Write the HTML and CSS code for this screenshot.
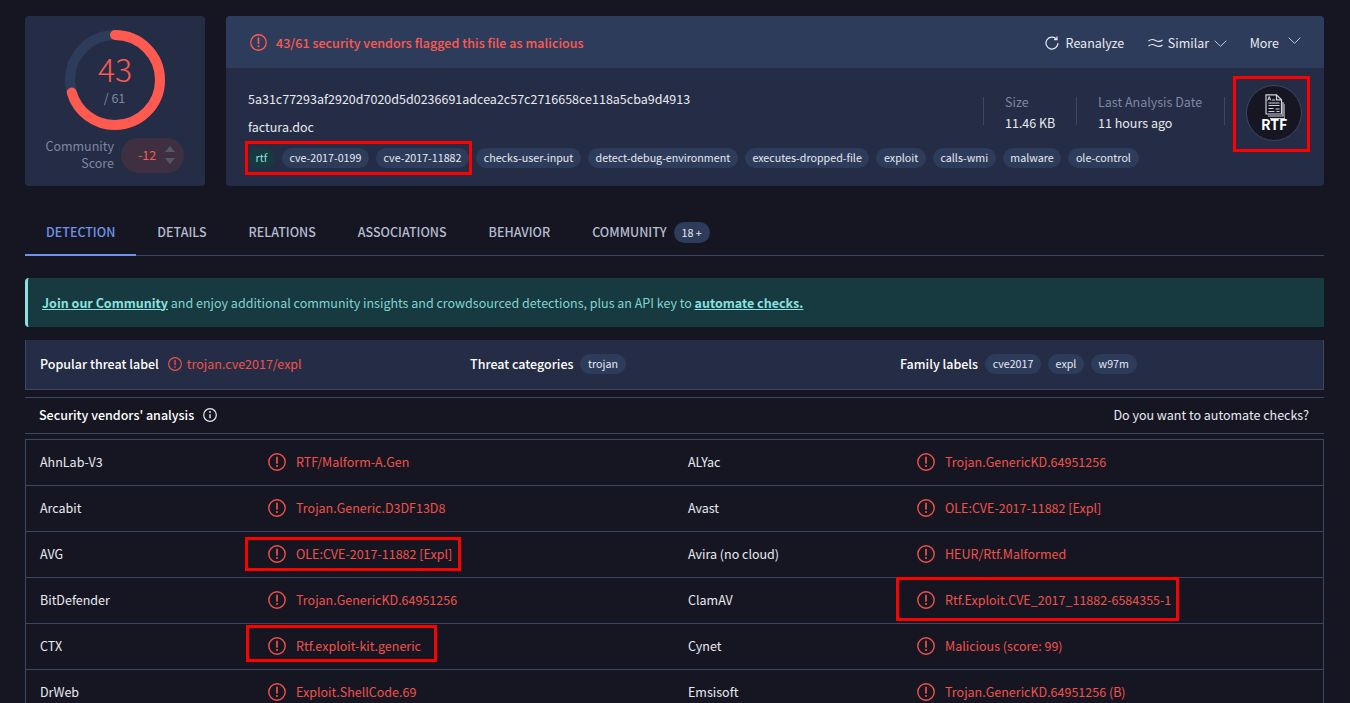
FILE: index.html
```
<!DOCTYPE html>
<html lang="en">
<head>
<meta charset="utf-8">
<title>VirusTotal - File</title>
<link rel="stylesheet" href="styles.css">
</head>
<body>
<svg class="defs" width="0" height="0" aria-hidden="true">
  <symbol id="alert" viewBox="0 0 18 18">
    <circle cx="9" cy="9" r="8.2" fill="none" stroke="currentColor" stroke-width="1.4"/>
    <path d="M9 4.4v5.6" fill="none" stroke="currentColor" stroke-width="1.7" stroke-linecap="round"/>
    <circle cx="9" cy="13" r="1.05" fill="currentColor"/>
  </symbol>
</svg>
<main class="page">
  <section class="summary">
    <div class="score-card">
      <div class="gauge">
        <svg class="gauge-ring" width="100" height="100" viewBox="0 0 100 100">
          <circle class="ring-track" cx="50" cy="50" r="45"/>
          <circle class="ring-value" cx="50" cy="50" r="45" transform="rotate(-90 50 50)" pathLength="61" stroke-dasharray="43 61"/>
        </svg>
        <div class="gauge-label">
          <span class="gauge-num">43</span>
          <span class="gauge-total">/ 61</span>
        </div>
      </div>
      <div class="community">
        <span class="community-label">Community<br>Score</span>
        <span class="community-pill">
          <span class="community-val">-12</span>
          <span class="votes"><i class="tri-up"></i><i class="tri-down"></i></span>
        </span>
      </div>
    </div>
    <div class="file-card">
      <header class="file-head">
        <svg class="i-alert-head"><use href="#alert"/></svg>
        <strong class="flag-text">43/61 security vendors flagged this file as malicious</strong>
        <nav class="actions">
          <span class="action">
            <svg width="14" height="14" viewBox="0 0 14 14" fill="none" stroke="currentColor" stroke-width="1.2"><path d="M11.6 3.2A6 6 0 1 0 13 7"/><path d="M12 .6v3h-3"/></svg>
            Reanalyze
          </span>
          <span class="action similar">
            <svg width="15" height="10" viewBox="0 0 15 10" fill="none" stroke="currentColor" stroke-width="1.1"><path d="M.5 3C3 .8 5 1 7.5 2.4S12 4 14.5 2"/><path d="M.5 8C3 5.8 5 6 7.5 7.4S12 9 14.5 7"/></svg>
            Similar
            <svg class="chev" width="13" height="7" viewBox="0 0 13 7" fill="none" stroke="currentColor" stroke-width="1"><path d="M.7.7l5.8 5.6L12.3.7"/></svg>
          </span>
          <span class="action more">
            More
            <svg class="chev up" width="13" height="7" viewBox="0 0 13 7" fill="none" stroke="currentColor" stroke-width="1"><path d="M.7.7l5.8 5.6L12.3.7"/></svg>
          </span>
        </nav>
      </header>
      <div class="file-body">
        <div class="file-info">
          <div class="file-hash">5a31c77293af2920d7020d5d0236691adcea2c57c2716658ce118a5cba9d4913</div>
          <div class="file-name">factura.doc</div>
          <div class="tags">
            <span class="tag tag-green">rtf</span>
            <span class="tag">cve-2017-0199</span>
            <span class="tag">cve-2017-11882</span>
            <span class="tag">checks-user-input</span>
            <span class="tag">detect-debug-environment</span>
            <span class="tag">executes-dropped-file</span>
            <span class="tag">exploit</span>
            <span class="tag">calls-wmi</span>
            <span class="tag">malware</span>
            <span class="tag">ole-control</span>
          </div>
        </div>
        <div class="stat stat-size">
          <span class="stat-label">Size</span>
          <span class="stat-val">11.46 KB</span>
        </div>
        <div class="stat stat-date">
          <span class="stat-label">Last Analysis Date</span>
          <span class="stat-val">11 hours ago</span>
        </div>
        <div class="type-wrap">
          <i class="type-rule"></i>
          <div class="type-badge">
            <svg width="22" height="26" viewBox="0 0 22 26" fill="none" stroke="#d0d3da" stroke-width="1.2">
              <path d="M3 .8h10.5l5 5V20H3z" fill="#161622"/>
              <path d="M13.5.8v5h5"/>
              <path d="M5 22h15V8M7 24.5h15V10"/>
              <path d="M9 6h3M5.5 9h11M5.5 11.5h11"/>
              <path d="M5.5 14.5h5M5.5 17.5h6M12.5 15h4M13.5 17.5h3"/>
              <path d="M4.6 6.5l1.6-4 1.6 4M5.2 5h2" stroke-width="1"/>
            </svg>
            <span class="type-text">RTF</span>
          </div>
        </div>
      </div>
    </div>
  </section>

  <nav class="tabs">
    <span class="tab active">DETECTION</span>
    <span class="tab">DETAILS</span>
    <span class="tab">RELATIONS</span>
    <span class="tab">ASSOCIATIONS</span>
    <span class="tab">BEHAVIOR</span>
    <span class="tab">COMMUNITY <span class="tab-count">18 +</span></span>
  </nav>

  <div class="banner">
    <span><a class="banner-link">Join our Community</a> and enjoy additional community insights and crowdsourced detections, plus an API key to <a class="banner-link">automate checks.</a></span>
  </div>

  <section class="threat">
    <div class="threat-cell">
      <strong>Popular threat label</strong>
      <span class="threat-name"><svg class="i-alert-sm"><use href="#alert"/></svg>trojan.cve2017/expl</span>
    </div>
    <div class="threat-cell">
      <strong>Threat categories</strong>
      <span class="tag">trojan</span>
    </div>
    <div class="threat-cell">
      <strong>Family labels</strong>
      <span class="tag-row"><span class="tag">cve2017</span><span class="tag">expl</span><span class="tag">w97m</span></span>
    </div>
  </section>

  <div class="vendors-head">
    <strong>Security vendors' analysis</strong>
    <svg class="info" width="14" height="14" viewBox="0 0 14 14" fill="none" stroke="currentColor"><circle cx="7" cy="7" r="6.3" stroke-width="1.2"/><path d="M7 6.2v4" stroke-width="1.4"/><circle cx="7" cy="4" r=".9" fill="currentColor" stroke="none"/></svg>
    <span class="automate">Do you want to automate checks?</span>
  </div>

  <section class="vendors">
    <div class="row">
      <span class="vendor">AhnLab-V3</span>
      <span class="verdict"><svg class="i-alert"><use href="#alert"/></svg>RTF/Malform-A.Gen</span>
      <span class="vendor">ALYac</span>
      <span class="verdict"><svg class="i-alert"><use href="#alert"/></svg>Trojan.GenericKD.64951256</span>
    </div>
    <div class="row">
      <span class="vendor">Arcabit</span>
      <span class="verdict"><svg class="i-alert"><use href="#alert"/></svg>Trojan.Generic.D3DF13D8</span>
      <span class="vendor">Avast</span>
      <span class="verdict"><svg class="i-alert"><use href="#alert"/></svg>OLE:CVE-2017-11882 [Expl]</span>
    </div>
    <div class="row">
      <span class="vendor">AVG</span>
      <span class="verdict"><svg class="i-alert"><use href="#alert"/></svg>OLE:CVE-2017-11882 [Expl]</span>
      <span class="vendor">Avira (no cloud)</span>
      <span class="verdict"><svg class="i-alert"><use href="#alert"/></svg>HEUR/Rtf.Malformed</span>
    </div>
    <div class="row">
      <span class="vendor">BitDefender</span>
      <span class="verdict"><svg class="i-alert"><use href="#alert"/></svg>Trojan.GenericKD.64951256</span>
      <span class="vendor">ClamAV</span>
      <span class="verdict"><svg class="i-alert"><use href="#alert"/></svg>Rtf.Exploit.CVE_2017_11882-6584355-1</span>
    </div>
    <div class="row">
      <span class="vendor">CTX</span>
      <span class="verdict"><svg class="i-alert"><use href="#alert"/></svg>Rtf.exploit-kit.generic</span>
      <span class="vendor">Cynet</span>
      <span class="verdict"><svg class="i-alert"><use href="#alert"/></svg>Malicious (score: 99)</span>
    </div>
    <div class="row">
      <span class="vendor">DrWeb</span>
      <span class="verdict"><svg class="i-alert"><use href="#alert"/></svg>Exploit.ShellCode.69</span>
      <span class="vendor">Emsisoft</span>
      <span class="verdict"><svg class="i-alert"><use href="#alert"/></svg>Trojan.GenericKD.64951256 (B)</span>
    </div>
  </section>
</main>
<div class="mark mark-tags"></div>
<div class="mark mark-type"></div>
<div class="mark mark-avg"></div>
<div class="mark mark-ctx"></div>
<div class="mark mark-clam"></div>
</body>
</html>
```
FILE: styles.css
```
* { box-sizing: border-box; }
html, body { margin: 0; height: 703px; overflow: hidden; }
body {
  background: #161623;
  color: #e8eaf0;
  font-family: "Noto Sans CJK SC", "Noto Sans", sans-serif;
  font-size: 12.5px;
  line-height: 18px;
  position: relative;
}
.defs { position: absolute; }
.page { padding: 16px 26px 0 25px; }
strong { font-weight: 500; }

.summary { display: flex; gap: 21px; height: 170px; }
.score-card {
  width: 180px; background: #252c45; border-radius: 4px;
  padding-top: 14px; display: flex; flex-direction: column; align-items: center;
}
.gauge { position: relative; width: 100px; height: 100px; }
.gauge-ring { display: block; }
.ring-track, .ring-value { fill: none; stroke-width: 10; }
.ring-track { stroke: #2e3c5c; }
.ring-value { stroke: #ff5a50; stroke-linecap: round; }
.gauge-label { position: absolute; inset: 0; display: flex; flex-direction: column; align-items: center; }
.gauge-num { color: #ff5a50; font-size: 32px; line-height: 32px; font-weight: 300; margin-top: 22px; }
.gauge-total { color: #7d88a3; font-size: 12.5px; line-height: 18px; margin-top: 5px; margin-right: 1px; }
.community { display: flex; align-items: center; gap: 7px; margin-top: 7px; width: 100%; padding-left: 20px; }
.community-label { color: #7d88a3; text-align: right; width: 69px; line-height: 17px; padding-bottom: 2px; }
.community-pill {
  width: 63px; height: 35px; border-radius: 18px; background: #3e3040;
  display: flex; align-items: center; padding-left: 17px; position: relative;
}
.community-val { color: #ff5a50; }
.votes { position: absolute; right: 9px; top: 8px; display: flex; flex-direction: column; gap: 6px; }
.tri-up, .tri-down { display: block; width: 0; height: 0; border-left: 5px solid transparent; border-right: 5px solid transparent; }
.tri-up { border-bottom: 6px solid #54566a; }
.tri-down { border-top: 6px solid #54566a; }

.file-card { flex: 1; min-width: 0; background: #252c45; border-radius: 4px; overflow: hidden; display: flex; flex-direction: column; }
.file-head { height: 52px; background: #2e3c5c; display: flex; align-items: center; padding: 2px 23px 0 24px; flex: none; }
.i-alert-head { width: 17px; height: 17px; color: #ff5a50; margin-right: 9px; margin-top: -2px; }
.flag-text { color: #ff5a50; letter-spacing: .04px; }
.actions { margin-left: auto; display: flex; color: #e8eaf0; }
.action { display: flex; align-items: center; gap: 7px; white-space: nowrap; }
.similar { margin-left: 23.5px; gap: 5px; }
.more { margin-left: 22.5px; gap: 9px; }
.chev { color: #c3c9d8; }
.chev.up { margin-top: -5px; }

.file-body { flex: 1; display: flex; padding-left: 22px; }
.file-info { flex: 1; min-width: 0; padding-top: 22px; }
.file-hash { line-height: 18px; }
.file-name { margin-top: 10px; line-height: 18px; }
.tags { display: flex; gap: 7px; margin-top: 12px; }
.tag-row { display: flex; gap: 7px; }
.tag {
  display: inline-block; height: 20px; line-height: 20px; padding: 0 7.6px; border-radius: 10px;
  background: #2e3c5c; color: #e8eaf0; font-size: 10.7px; white-space: nowrap;
}
.tag-green { background: #163a3f; color: #8be0e0; }
.stat {
  display: flex; flex-direction: column; margin-top: 29px; height: 28px; border-left: 1px solid #3c4763;
  padding-left: 21px; flex: none; white-space: nowrap;
}
.stat-size { width: 93px; }
.stat-date { width: 148px; }
.stat-label { color: #7d88a3; line-height: 18px; margin-top: -4px; }
.stat-val { line-height: 18px; margin-top: 3px; }
.type-wrap { width: 100px; padding-left: 22px; padding-top: 17px; flex: none; position: relative; }
.type-rule { position: absolute; left: 0; top: 29px; height: 28px; width: 1px; background: #3c4763; }
.type-badge {
  width: 56px; height: 56px; border-radius: 50%; background: #161622; border: 1px solid #3c4763;
  display: flex; flex-direction: column; align-items: center; padding-top: 8px;
}
.type-text { font-weight: 700; font-size: 14px; line-height: 14px; color: #fff; margin-top: -3px; }

.tabs { display: flex; height: 48px; margin-top: 22px; border-bottom: 1px solid #3c4763; }
.tab {
  padding: 0 21px; height: 48px; font-size: 12.5px; font-weight: 500; color: #b4bcd0;
  display: flex; align-items: center; gap: 7px;
}
.tab.active { color: #6f93e8; border-bottom: 2px solid #6f93e8; padding-top: 1px; }
.tab-count {
  background: #2e3c5c; color: #e8eaf0; font-size: 10.7px; font-weight: 400; height: 21px; line-height: 21px; padding: 0 8px; border-radius: 11px;
}

.banner {
  height: 49px; margin-top: 22px; background: #163a3f; border-left: 3px solid #8be0e0; border-radius: 4px 0 0 4px;
  color: #83d3d3; display: flex; align-items: center; padding-left: 14px;
}
.banner-link { font-weight: 700; text-decoration: underline; color: #8be0e0; }

.threat {
  height: 50px; margin-top: 13px; background: #252c45;
  border: 1px solid #3c4763; border-top: 0; padding-bottom: 2px;
  display: grid; grid-template-columns: 430px 430px 1fr; padding-left: 14px; align-items: center;
}
.threat-cell { display: flex; align-items: center; gap: 7px; }
.threat-cell strong { color: #fff; }
.threat-name { display: flex; align-items: center; color: #f0524a; margin-left: 2px; }
.i-alert-sm { width: 14px; height: 14px; margin-right: 5px; }

.vendors-head {
  height: 37px; margin-top: 7px; border-top: 1px solid #3c4763; border-bottom: 1px solid #3c4763;
  display: flex; align-items: center; padding: 0 15px 2px 14px;
}
.vendors-head strong { color: #fff; }
.info { margin-left: 9px; }
.automate { margin-left: auto; }

.vendors { margin-top: 5px; border: 1px solid #3c4763; border-bottom: 0; }
.row {
  display: grid; grid-template-columns: 228px 420px 229px 1fr; height: 46px; align-items: center;
  padding-left: 14px; padding-bottom: 1px; border-bottom: 1px solid #3c4763;
}
.vendor { color: #e8eaf0; }
.verdict { display: flex; align-items: center; color: #f0524a; gap: 10px; white-space: nowrap; }
.i-alert { width: 18px; height: 18px; flex: none; }

.mark { position: absolute; border: 3px solid #f00; }
.mark-tags { left: 245px; top: 141px; width: 227px; height: 34px; }
.mark-type { left: 1233px; top: 76px; width: 77px; height: 76px; }
.mark-avg { left: 245px; top: 537px; width: 216px; height: 34px; }
.mark-ctx { left: 246px; top: 625px; width: 191px; height: 37px; }
.mark-clam { left: 896px; top: 577px; width: 283px; height: 44px; }
```
